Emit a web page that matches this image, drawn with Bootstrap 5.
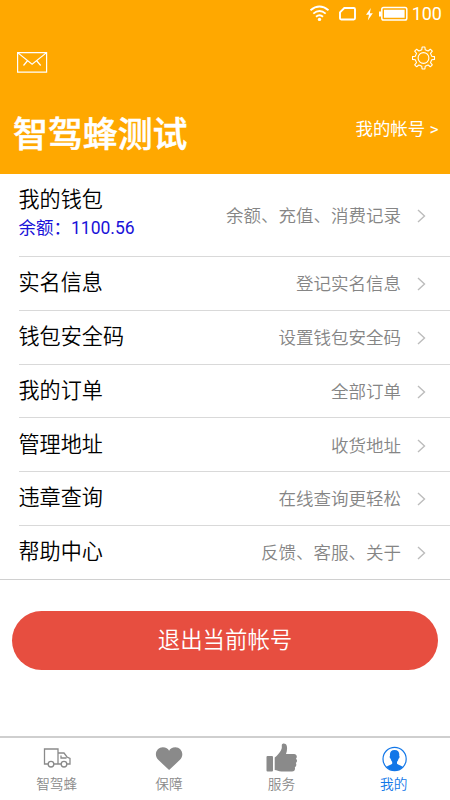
<!DOCTYPE html>
<html lang="zh-CN">
<head>
<meta charset="utf-8">
<meta name="viewport" content="width=device-width, initial-scale=1">
<title>我的</title>
<link href="https://cdn.jsdelivr.net/npm/bootstrap@5.3.0/dist/css/bootstrap.min.css" rel="stylesheet">
<style>
body{font-family:Roboto,"Noto Sans CJK SC",sans-serif;color:#000;line-height:1;font-weight:350}
svg{display:block;flex:none}
.app{height:800px;overflow:hidden}
.top-area{height:173.5px;background:#ffa800;color:#fff}
.status{height:28px;padding-right:8px}
.status-num{font-size:18px;line-height:28px;font-weight:400}
.tools{height:66px;padding:17px 14px 0 16px}
.user-name{font-size:34.9px;line-height:52px;font-weight:500;-webkit-text-stroke:.5px #fff;margin-left:13px}
.account{font-size:17.4px;line-height:24px;padding-top:7px;margin-right:11.5px;font-weight:400}
.menu-list{padding-left:18.5px}
.menu-list>.entry{height:53.83px;border-bottom:1px solid #d9d9d9;padding-right:23px;color:inherit}
.menu-list>.entry.wallet{height:83.5px}
.menu-list>.entry:last-child{margin-left:-18.5px;padding-left:18.5px;border-color:#d0d0d0}
.title{font-size:21.1px;line-height:28px;margin-top:-.5px}
.wallet .title{margin-top:-4px}
.balance{font-size:17.5px;line-height:24px;color:#1a12d8;margin-top:2px;font-weight:400}
.hint{font-size:17.5px;line-height:24px;color:#858585;padding-top:1.5px}
.chev{margin-left:16px;margin-top:1.5px}
.logout{height:59px;margin:31px 12px 0;background:#e74e40;color:#fff;font-size:22.4px;line-height:30px;border:0;font-weight:350}
.logout:hover{background:#d64436;color:#fff}
.tabs{height:64px;border-top:2px solid #cfcfcf;padding-left:.5px}
.tab-item{width:112.5px;color:#8a8a8a;font-size:13.7px;line-height:18px;padding-top:5px}
.tab-item svg{height:32px}
.tab-item.current{color:#1277e8}
</style>
<script src="https://cdn.jsdelivr.net/npm/bootstrap@5.3.0/dist/js/bootstrap.bundle.min.js"></script>
</head>
<body class="bg-white">
<div class="app d-flex flex-column">
  <header class="top-area flex-shrink-0">
    <div class="status d-flex justify-content-end align-items-center">
      <svg width="104" height="28" viewBox="308 0 104 28" fill="none" stroke="#fff" stroke-width="1.9">
        <path d="M310.500 10.300Q319.500 2.800 328.500 10.300M313.300 13.600Q319.500 8.300 325.700 13.600M316 16.700Q319.500 13.800 323 16.700"/>
        <circle cx="319.500" cy="19.400" r="1.700" fill="#fff" stroke="none"/>
        <path d="M344.300 8H353.800Q355 8 355 9.200V18.300Q355 19.500 353.800 19.500H341.200Q340 19.500 340 18.300V12.300Z"/>
        <path d="M370.800 8L366 14.800H369L367.800 20.500L372.800 13.200H369.800Z" fill="#fff" stroke="none"/>
        <rect x="381.800" y="7.500" width="25" height="12.500" rx="1.800" stroke-width="1.500"/>
        <path d="M384 9.800H404.600V17.800H384ZM379 11.500H381V16.500H379Z" fill="#fff" stroke="none"/>
      </svg>
      <span class="status-num">100</span>
    </div>
    <div class="tools d-flex justify-content-between">
      <svg width="32" height="34" viewBox="16 45 32 34" fill="none" stroke="#fff" stroke-width="1.200"><path d="M17.600 52.600H46.600V72.200H17.600ZM17.600 52.600L32.100 64.300L46.600 52.600M27.300 61L23.500 65.500M36.900 61L40.700 65.500"/></svg>
      <svg width="24" height="26" viewBox="411.500 45 24 26" fill="none" stroke="#fff" stroke-width="1.100" stroke-linejoin="round"><circle cx="423" cy="58" r="5.400"/><path transform="translate(-.5 0)" d="M421.800 49.800L422.100 47H424.900L425.200 49.800L428.100 51L430.300 49.200L432.300 51.200L430.500 53.400L431.700 56.300L434.500 56.600V59.400L431.700 59.700L430.500 62.600L432.300 64.800L430.300 66.800L428.100 65L425.200 66.200L424.900 69H422.100L421.800 66.200L418.900 65L416.700 66.800L414.700 64.800L416.500 62.600L415.300 59.700L412.500 59.400V56.600L415.300 56.300L416.500 53.400L414.700 51.200L416.700 49.200L418.900 51Z"/></svg>
    </div>
    <div class="d-flex justify-content-between pt-3">
      <div class="user-name">智驾蜂测试</div>
      <div class="account">我的帐号 &gt;</div>
    </div>
  </header>
  <main class="flex-grow-1">
    <div class="menu-list">
      <a href="#" class="entry wallet d-flex align-items-center text-decoration-none"><div class="flex-grow-1"><div class="title">我的钱包</div><div class="balance">余额：1100.56</div></div><span class="hint">余额、充值、消费记录</span><svg class="chev" width="10" height="14" fill="none" stroke="#bcbcbc" stroke-width="1.400"><path d="M1 1L7.500 7L1 13"/></svg></a>
      <a href="#" class="entry d-flex align-items-center text-decoration-none"><span class="title flex-grow-1">实名信息</span><span class="hint">登记实名信息</span><svg class="chev" width="10" height="14" fill="none" stroke="#bcbcbc" stroke-width="1.400"><path d="M1 1L7.500 7L1 13"/></svg></a>
      <a href="#" class="entry d-flex align-items-center text-decoration-none"><span class="title flex-grow-1">钱包安全码</span><span class="hint">设置钱包安全码</span><svg class="chev" width="10" height="14" fill="none" stroke="#bcbcbc" stroke-width="1.400"><path d="M1 1L7.500 7L1 13"/></svg></a>
      <a href="#" class="entry d-flex align-items-center text-decoration-none"><span class="title flex-grow-1">我的订单</span><span class="hint">全部订单</span><svg class="chev" width="10" height="14" fill="none" stroke="#bcbcbc" stroke-width="1.400"><path d="M1 1L7.500 7L1 13"/></svg></a>
      <a href="#" class="entry d-flex align-items-center text-decoration-none"><span class="title flex-grow-1">管理地址</span><span class="hint">收货地址</span><svg class="chev" width="10" height="14" fill="none" stroke="#bcbcbc" stroke-width="1.400"><path d="M1 1L7.500 7L1 13"/></svg></a>
      <a href="#" class="entry d-flex align-items-center text-decoration-none"><span class="title flex-grow-1">违章查询</span><span class="hint">在线查询更轻松</span><svg class="chev" width="10" height="14" fill="none" stroke="#bcbcbc" stroke-width="1.400"><path d="M1 1L7.500 7L1 13"/></svg></a>
      <a href="#" class="entry d-flex align-items-center text-decoration-none"><span class="title flex-grow-1">帮助中心</span><span class="hint">反馈、客服、关于</span><svg class="chev" width="10" height="14" fill="none" stroke="#bcbcbc" stroke-width="1.400"><path d="M1 1L7.500 7L1 13"/></svg></a>
    </div>
    <div class="d-grid"><button type="button" class="logout btn rounded-pill p-0">退出当前帐号</button></div>
  </main>
  <nav class="tabs d-flex flex-shrink-0">
    <div class="tab-item d-flex flex-column align-items-center">
      <svg width="32" height="32" viewBox="40.500 742.500 32 32" fill="none" stroke="currentColor" stroke-width="1.300"><path d="M47.500 763.500H44V748.500H57.500V763.500H53.500M57.500 752.500H63.500L66.500 756.500L69.500 758V763.500H66.500M60.500 763.500H57.500M60.500 755V757.500H66"/><circle cx="50.500" cy="763.700" r="2.800"/><circle cx="63.500" cy="763.700" r="2.800"/></svg>
      <span>智驾蜂</span>
    </div>
    <div class="tab-item d-flex flex-column align-items-center">
      <svg width="32" height="32" viewBox="153.500 742.500 32 32" fill="currentColor"><path d="M169.600 769.500L159 759.600C153.500 754 157.500 746.700 163.300 746.700C166.500 746.700 168.500 748.200 169.600 750.200C170.700 748.200 172.700 746.700 175.900 746.700C181.700 746.700 185.700 754 180.200 759.600Z"/></svg>
      <span>保障</span>
    </div>
    <div class="tab-item d-flex flex-column align-items-center">
      <svg width="34" height="32" viewBox="264.500 742.500 34 32" fill="currentColor"><rect x="267" y="755.500" width="6.500" height="15.500" rx="1"/><path d="M275.200 757C278 755 281.500 751 282.300 747.500V744.500C282.500 742.500 286.500 742.300 287.300 745.500C287.900 748 287.500 750.500 286.500 753.500H294.500C297.500 753.500 298 757 296.500 758.300C298 759.500 297.800 761.500 296.300 762.500C297.300 764 296.800 766 295.300 766.700C296 768.500 295 771 292.500 771H282C279 771 277.500 769.500 275.200 769.500Z"/></svg>
      <span>服务</span>
    </div>
    <div class="tab-item current d-flex flex-column align-items-center">
      <svg width="32" height="32" viewBox="378 743 32 32"><circle cx="394.600" cy="759" r="11.600" fill="none" stroke="currentColor" stroke-width="1.200"/><path d="M394.600 750C398.200 750 399.600 752.300 399.200 755.700C400 756.500 399.300 758.500 398.500 758.800C398.200 760.300 397.500 761.300 397 762V763.700C398 765 401.500 765.500 402.800 767Q399.500 770.600 394.600 770.600T386.400 767C387.700 765.500 391.200 765 392.200 763.700V762C391.700 761.300 391 760.300 390.700 758.800C389.900 758.500 389.200 756.500 390 755.700C389.600 752.300 391 750 394.600 750Z" fill="currentColor"/></svg>
      <span>我的</span>
    </div>
  </nav>
</div>
</body>
</html>
